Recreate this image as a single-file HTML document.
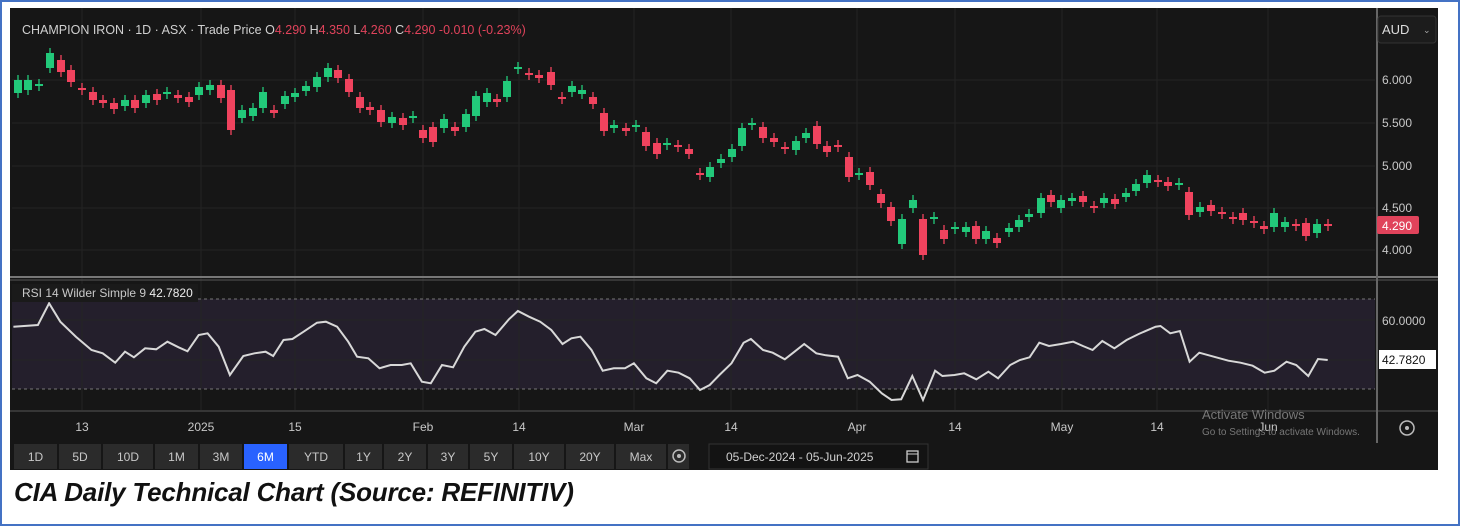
<!DOCTYPE html><html><head><style>
body{margin:0;background:#fff;width:1460px;height:526px;overflow:hidden;font-family:"Liberation Sans",sans-serif;}
#f{position:absolute;left:0;top:0;width:1456px;height:522px;border:2px solid #4472c4;}
.cap{position:absolute;left:14px;top:477px;font-size:26px;font-weight:bold;font-style:italic;color:#111;letter-spacing:-0.2px}
</style></head><body><div id="f"></div>
<svg id="s" width="1460" height="526" style="position:absolute;left:0;top:0" font-family="Liberation Sans, sans-serif">
<rect x="10" y="8" width="1428" height="462" fill="#161616"/>
<rect x="12" y="299" width="1363" height="90" fill="#241f2c"/>
<g id="grid" stroke="#242424" stroke-width="1"></g>
<line x1="12" y1="299" x2="1375" y2="299" stroke="#777" stroke-dasharray="3,3"/>
<line x1="12" y1="389" x2="1375" y2="389" stroke="#777" stroke-dasharray="3,3"/>
<line x1="10" y1="277" x2="1438" y2="277" stroke="#777" stroke-width="2"/>
<line x1="10" y1="280" x2="1438" y2="280" stroke="#555"/>
<line x1="10" y1="411" x2="1438" y2="411" stroke="#555"/>
<line x1="1377" y1="8" x2="1377" y2="443" stroke="#666" stroke-width="2"/>
<g id="c"></g>
<polyline id="r" fill="none" stroke="#d8d8d8" stroke-width="2"/>
<text x="22" y="34" font-size="12.5" fill="#d0d0d0">CHAMPION IRON · 1D · ASX · Trade Price  <tspan fill="#d0d0d0">O</tspan><tspan fill="#e0435b">4.290</tspan> <tspan fill="#d0d0d0">H</tspan><tspan fill="#e0435b">4.350</tspan> <tspan fill="#d0d0d0">L</tspan><tspan fill="#e0435b">4.260</tspan> <tspan fill="#d0d0d0">C</tspan><tspan fill="#e0435b">4.290  -0.010 (-0.23%)</tspan></text>
<rect x="1378" y="16" width="58" height="27" rx="3" fill="#1c1c1c" stroke="#333"/>
<text x="1382" y="34" font-size="13" fill="#ddd">AUD</text><text x="1423" y="33" font-size="9" fill="#aaa">⌄</text>
<g font-size="12" fill="#c8c8c8">
<text x="1382" y="84">6.000</text><text x="1382" y="127">5.500</text><text x="1382" y="170">5.000</text><text x="1382" y="212">4.500</text><text x="1382" y="254">4.000</text>
<text x="1382" y="325">60.0000</text></g>
<rect x="1377" y="216" width="42" height="18" rx="2" fill="#e0435b"/><text x="1382" y="230" font-size="12" fill="#fff">4.290</text>
<rect x="1379" y="350" width="57" height="19" fill="#fff"/><text x="1382" y="364" font-size="12" fill="#111">42.7820</text>
<rect x="12" y="284" width="186" height="18" fill="#1a1a1a"/>
<text x="22" y="297" font-size="12" fill="#c8c8c8">RSI 14 Wilder Simple 9  <tspan fill="#eee">42.7820</tspan></text>
<g font-size="12" fill="#c8c8c8" text-anchor="middle">
<text x="82" y="431">13</text><text x="201" y="431">2025</text><text x="295" y="431">15</text><text x="423" y="431">Feb</text><text x="519" y="431">14</text><text x="634" y="431">Mar</text><text x="731" y="431">14</text><text x="857" y="431">Apr</text><text x="955" y="431">14</text><text x="1062" y="431">May</text><text x="1157" y="431">14</text><text x="1268" y="431">Jun</text></g>
<text x="1202" y="419" font-size="13" fill="#777">Activate Windows</text>
<text x="1202" y="435" font-size="10" fill="#777">Go to Settings to activate Windows.</text>
<circle cx="1407" cy="428" r="7" fill="none" stroke="#bbb" stroke-width="1.5"/><circle cx="1407" cy="428" r="2" fill="#bbb"/>
<g id="b" font-size="12" fill="#c8c8c8" text-anchor="middle"></g>
<rect x="709" y="444" width="219" height="25" fill="#131313" stroke="#333"/>
<text x="726" y="461" font-size="12" fill="#d0d0d0">05-Dec-2024  -  05-Jun-2025</text>
<rect x="907" y="451" width="11" height="11" fill="none" stroke="#ccc" stroke-width="1.3"/><line x1="907" y1="454" x2="918" y2="454" stroke="#ccc"/>
</svg>
<div class="cap">CIA Daily Technical Chart (Source: REFINITIV)</div>
<script>
var ns="http://www.w3.org/2000/svg";
function el(p,t,a){var e=document.createElementNS(ns,t);for(var k in a)e.setAttribute(k,a[k]);document.getElementById(p).appendChild(e);return e;}
[80,123,166,208,250,320,360].forEach(function(y){el("grid","line",{x1:12,x2:1375,y1:y,y2:y});});
[82,201,295,423,519,634,731,857,955,1062,1157,1268].forEach(function(x){el("grid","line",{x1:x,x2:x,y1:8,y2:410});});
var d=[[18,93,80],[28,90,80],[39,85,84],[50,68,53],[61,60,72],[71,70,82],[82,88,90],[93,92,100],[103,100,103],[114,103,109],[125,106,100],[135,100,108],[146,103,95],[157,94,100],[167,94,92],[178,95,98],[189,97,102],[199,95,87],[210,90,85],[221,85,98],[231,90,130],[242,118,110],[253,116,108],[263,108,92],[274,110,113],[285,104,96],[295,97,93],[306,91,86],[317,87,77],[328,77,68],[338,70,78],[349,79,92],[360,97,108],[370,107,110],[381,110,122],[392,123,117],[403,118,125],[413,117,116],[423,130,138],[433,127,142],[444,128,119],[455,127,131],[466,127,114],[476,116,96],[487,102,93],[497,99,102],[507,97,81],[518,68,67],[529,73,74],[539,75,78],[551,72,85],[562,97,99],[572,92,86],[582,94,90],[593,97,104],[604,113,131],[614,128,125],[626,128,131],[636,127,125],[646,132,146],[657,143,154],[667,144,143],[678,145,147],[689,149,154],[700,173,174],[710,177,167],[721,163,159],[732,157,149],[742,146,128],[752,124,123],[763,127,138],[774,138,142],[785,147,149],[796,150,141],[806,138,133],[817,126,144],[827,146,152],[838,145,147],[849,157,177],[859,175,173],[870,172,185],[881,194,203],[891,207,221],[902,244,219],[913,208,200],[923,219,255],[934,219,217],[944,230,239],[955,229,227],[966,232,227],[976,226,239],[986,239,231],[997,238,243],[1009,232,228],[1019,227,220],[1029,217,214],[1041,213,198],[1051,195,202],[1061,208,200],[1072,201,198],[1083,196,202],[1094,206,207],[1104,203,198],[1115,199,204],[1126,197,193],[1136,191,184],[1147,183,175],[1158,180,181],[1168,182,186],[1179,184,183],[1189,192,215],[1200,212,207],[1211,205,211],[1222,212,213],[1233,217,218],[1243,213,220],[1254,221,223],[1264,226,229],[1274,227,213],[1285,227,222],[1296,224,226],[1306,223,236],[1317,233,224],[1328,224,225]];
d.forEach(function(c){var g=c[2]<c[1],col=g?"#22c97a":"#f0435e",t=Math.min(c[1],c[2]),b=Math.max(c[1],c[2]);if(b-t<2)b=t+2;
el("c","line",{x1:c[0],x2:c[0],y1:t-5,y2:b+5,stroke:col,"stroke-width":1.3});el("c","rect",{x:c[0]-4,y:t,width:8,height:b-t,fill:col});});
var a=[[30,170],[85,165],[110,100],[135,155],[170,200],[205,240],[230,250],[258,278],[280,245],[300,262],[325,235],[350,238],[375,215],[400,232],[420,244],[445,195],[465,190],[490,230],[515,315],[545,258],[570,250],[595,245],[612,258],[635,210],[655,207],[680,185],[710,158],[730,155],[755,170],[780,215],[800,260],[825,265],[850,295],[875,285],[900,285],[920,280],[945,335],[965,340],[990,285],[1015,292],[1040,230],[1065,185],[1085,177],[1110,195],[1140,148],[1160,123],[1185,140],[1210,155],[1235,180],[1260,222],[1280,205],[1300,200],[1325,240],[1350,302],[1375,295],[1400,295],[1420,280],[1448,325],[1470,340],[1495,302],[1520,308],[1545,325],[1568,360]];
var b2=[[20,345],[40,315],[65,280],[90,218],[105,207],[130,240],[150,248],[175,268],[195,245],[215,222],[240,250],[260,256],[285,260],[305,325],[325,315],[350,335],[375,370],[395,390],[415,388],[438,318],[460,390],[485,302],[500,318],[525,315],[545,310],[570,328],[595,305],[615,325],[640,285],[660,270],[680,262],[700,218],[720,228],[745,222],[770,215],[790,228],[810,240],[830,213],[855,235],[880,210],[905,192],[940,170],[950,168],[970,190],[990,183],[1010,275],[1030,248],[1060,260],[1090,272],[1115,278],[1140,287],[1165,308],[1185,302],[1210,275],[1230,285],[1255,318],[1275,267],[1295,270]];
var pts=a.map(function(p){return (p[0]/2.24).toFixed(1)+","+(270+p[1]/3).toFixed(1);}).concat(b2.map(function(p){return (700+p[0]/2.063).toFixed(1)+","+(270+p[1]/3).toFixed(1);}));
document.getElementById("r").setAttribute("points",pts.join(" "));
var bx=[13,58,102,154,199,243,288,344,383,427,469,513,565,615,667,690],lab=["1D","5D","10D","1M","3M","6M","YTD","1Y","2Y","3Y","5Y","10Y","20Y","Max",""];
for(var i=0;i<15;i++){var x0=bx[i]+1,w=bx[i+1]-bx[i]-2;el("b","rect",{x:x0,y:444,width:w,height:25,fill:i==5?"#2962ff":"#2b2b2b"});
if(lab[i]){var t=el("b","text",{x:x0+w/2,y:461,fill:i==5?"#fff":"#c8c8c8"});t.textContent=lab[i];}}
el("b","circle",{cx:679,cy:456,r:6,fill:"none",stroke:"#bbb","stroke-width":1.5});el("b","circle",{cx:679,cy:456,r:2,fill:"#bbb"});
</script></body></html>
